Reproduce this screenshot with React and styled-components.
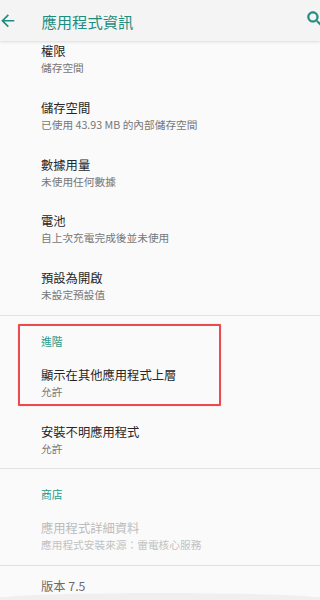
import React from "react";
import styled, { createGlobalStyle } from "styled-components";

const GlobalStyle = createGlobalStyle`
  html, body {
    margin: 0;
    padding: 0;
    background: #fafafa;
  }
  body {
    font-family: "Noto Sans CJK TC", "Noto Sans", sans-serif;
  }
`;

const Screen = styled.div`
  width: 320px;
  height: 600px;
  overflow: hidden;
  display: flex;
  flex-direction: column;
  background: #fafafa;
`;

const Toolbar = styled.header`
  position: relative;
  z-index: 2;
  flex: 0 0 41px;
  display: flex;
  align-items: center;
  background: #f4f4f4;
  box-shadow: 0 1px 3px rgba(0, 0, 0, 0.12);
  overflow: hidden;
`;

const BackButton = styled.svg`
  width: 19.5px;
  height: 19.5px;
  margin-left: -2px;
  flex: 0 0 auto;
  fill: #1e8c7e;
`;

const Title = styled.h1`
  margin: 0 0 0 24px;
  flex: 1;
  font-size: 15.3px;
  font-weight: 400;
  line-height: 20px;
  color: #1e8c7e;
  white-space: nowrap;
`;

const SearchIcon = styled.svg`
  width: 20px;
  height: 20px;
  flex: 0 0 auto;
  margin-right: -5px;
  margin-top: -3px;
  fill: #1e8c7e;
  stroke: #1e8c7e;
  stroke-width: 0.6;
`;

const Scroll = styled.main`
  flex: 1;
  overflow: hidden;
  position: relative;
`;

const List = styled.div`
  margin-top: -10px;
`;

const Section = styled.section`
  position: relative;
`;

const Divider = styled.div`
  height: 1px;
  background: #e2e2e2;
`;

const Category = styled.div`
  height: 39px;
  box-sizing: border-box;
  padding: 18px 0 0 41px;
  font-size: 10.8px;
  line-height: 14px;
  color: #1e9a8a;
`;

const Item = styled.div`
  box-sizing: border-box;
  height: 56.75px;
  padding: 12px 16px 0 41px;
`;

const ItemTitle = styled.div`
  font-size: 12.3px;
  line-height: 16px;
  color: ${(p) => (p.$disabled ? "#bcbcbc" : "#262626")};
  white-space: nowrap;
`;

const ItemSummary = styled.div`
  font-size: 10.7px;
  line-height: 17px;
  color: ${(p) => (p.$disabled ? "#c2c2c2" : "#777777")};
  white-space: nowrap;
`;

const Version = styled.div`
  height: 27px;
  box-sizing: border-box;
  padding: 12px 0 0 41px;
  font-size: 12.3px;
  line-height: 16px;
  color: #6a6a6a;
`;

const NavCurve = styled.div`
  height: 40px;
  margin: 0 -20px;
  background: #efefef;
  border-radius: 50% 50% 0 0 / 8px 8px 0 0;
`;

const Highlight = styled.div`
  position: absolute;
  left: 18px;
  top: 8px;
  width: 203px;
  height: 82px;
  box-sizing: border-box;
  border: 2px solid #ea4a50;
  box-shadow: 0 0 1px rgba(234, 74, 80, 0.6);
  border-radius: 1px;
  pointer-events: none;
`;

const general = [
  { title: "權限", summary: "儲存空間" },
  { title: "儲存空間", summary: "已使用 43.93 MB 的內部儲存空間" },
  { title: "數據用量", summary: "未使用任何數據" },
  { title: "電池", summary: "自上次充電完成後並未使用" },
  { title: "預設為開啟", summary: "未設定預設值" },
];

const advanced = [
  { title: "顯示在其他應用程式上層", summary: "允許" },
  { title: "安裝不明應用程式", summary: "允許" },
];

function Row({ title, summary, disabled }) {
  return (
    <Item>
      <ItemTitle $disabled={disabled}>{title}</ItemTitle>
      <ItemSummary $disabled={disabled}>{summary}</ItemSummary>
    </Item>
  );
}

export default function App() {
  return (
    <>
      <GlobalStyle />
      <Screen>
        <Toolbar>
          <BackButton viewBox="0 0 24 24">
            <path d="M20 11H7.83l5.59-5.59L12 4l-8 8 8 8 1.41-1.41L7.83 13H20v-2z" />
          </BackButton>
          <Title>應用程式資訊</Title>
          <SearchIcon viewBox="0 0 24 24">
            <path d="M15.5 14h-.79l-.28-.27C15.41 12.59 16 11.11 16 9.5 16 5.91 13.09 3 9.5 3S3 5.91 3 9.5 5.91 16 9.5 16c1.61 0 3.090-.59 4.23-1.57l.27.28v.79l5 4.99L20.49 19l-4.99-5zm-6 0C7.01 14 5 11.990 5 9.5S7.01 5 9.5 5 14 7.01 14 9.5 11.99 14 9.5 14z" />
          </SearchIcon>
        </Toolbar>
        <Scroll>
          <List>
            <Section>
              {general.map((row) => (
                <Row key={row.title} {...row} />
              ))}
            </Section>
            <Divider />
            <Section>
              <Category>進階</Category>
              {advanced.map((row) => (
                <Row key={row.title} {...row} />
              ))}
              <Highlight />
            </Section>
            <Divider />
            <Section>
              <Category>商店</Category>
              <Row
                disabled
                title="應用程式詳細資料"
                summary="應用程式安裝來源：雷電核心服務"
              />
            </Section>
            <Divider />
            <Version>版本 7.5</Version>
            <NavCurve />
          </List>
        </Scroll>
      </Screen>
    </>
  );
}
